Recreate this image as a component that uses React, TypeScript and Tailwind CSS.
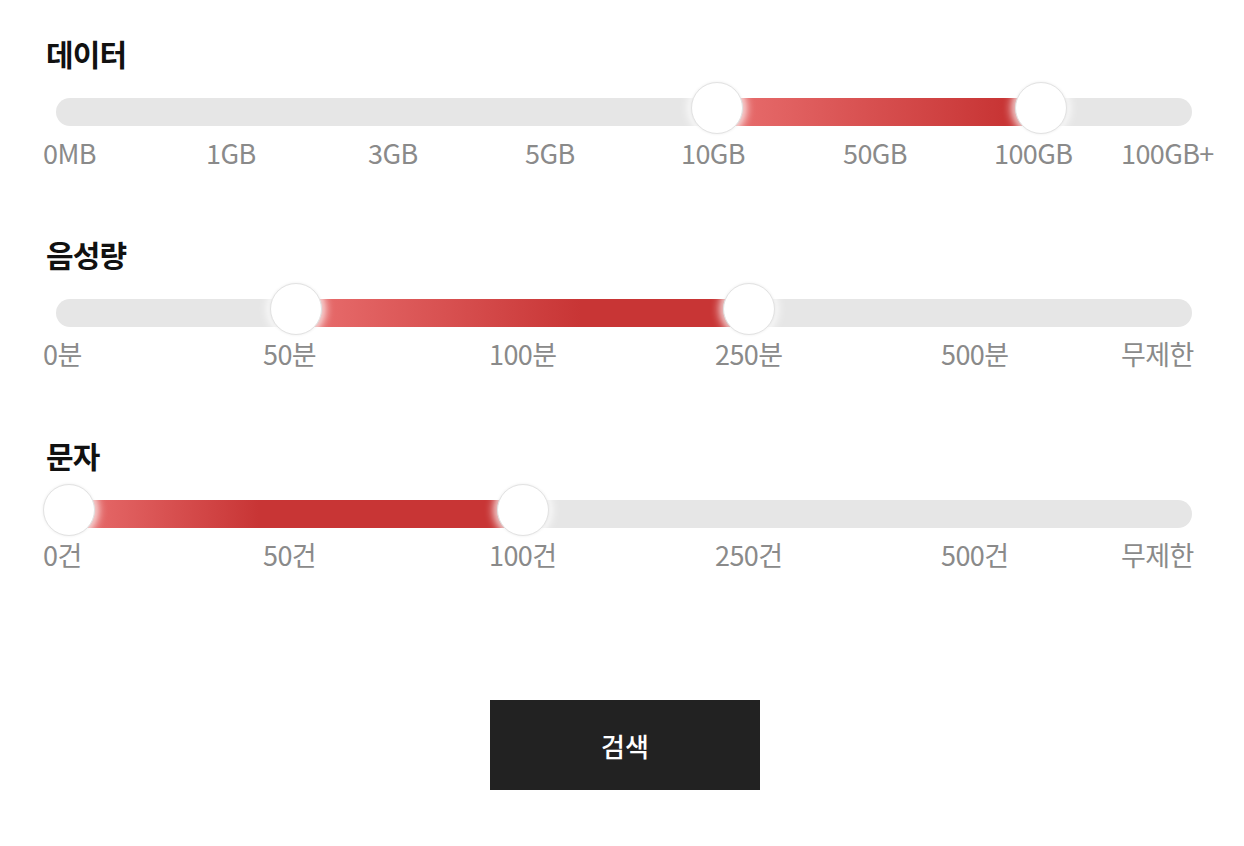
import React from 'react';

interface Row {
  title: string;
  labels: { text: string; w: string }[];
  steps: number;
  from: number;
  to: number;
  fill: string;
}

const rows: Row[] = [
  {
    title: '데이터',
    steps: 7,
    from: 4,
    to: 6,
    fill: 'bg-[linear-gradient(90deg,#e96f6f_0px,#c83535_285px)]',
    labels: [
      { text: '0MB', w: 'w-[163px]' },
      { text: '1GB', w: 'w-[162px]' },
      { text: '3GB', w: 'w-[157px]' },
      { text: '5GB', w: 'w-[156px]' },
      { text: '10GB', w: 'w-[162px]' },
      { text: '50GB', w: 'w-[151px]' },
      { text: '100GB', w: 'w-[127px]' },
      { text: '100GB+', w: '' },
    ],
  },
  {
    title: '음성량',
    steps: 5,
    from: 1,
    to: 3,
    fill: 'bg-[linear-gradient(90deg,#e96f6f_0px,#c83535_285px)]',
    labels: [
      { text: '0분', w: 'w-[220px]' },
      { text: '50분', w: 'w-[226px]' },
      { text: '100분', w: 'w-[226px]' },
      { text: '250분', w: 'w-[226px]' },
      { text: '500분', w: 'w-[180px]' },
      { text: '무제한', w: '' },
    ],
  },
  {
    title: '문자',
    steps: 5,
    from: 0,
    to: 2,
    fill: 'bg-[linear-gradient(90deg,#e96f6f_0px,#c83535_190px)]',
    labels: [
      { text: '0건', w: 'w-[220px]' },
      { text: '50건', w: 'w-[226px]' },
      { text: '100건', w: 'w-[226px]' },
      { text: '250건', w: 'w-[226px]' },
      { text: '500건', w: 'w-[180px]' },
      { text: '무제한', w: '' },
    ],
  },
];

// thumb travel range (left edge of thumb), px
const RANGE = 1134;
const THUMB = 52;

function Thumb({ left }: { left: number }) {
  return (
    <div
      className="absolute top-0 h-[52px] w-[52px] rounded-full border border-[#e2e2e2] bg-white shadow-[0_0_3px_rgba(0,0,0,0.08),0_0_10px_3px_rgba(255,255,255,0.95)]"
      style={{ left }}
    />
  );
}

function RangeRow({ row }: { row: Row }) {
  const a = (row.from / row.steps) * RANGE;
  const b = (row.to / row.steps) * RANGE;
  return (
    <section className="mb-[64px]">
      <h2 className="ml-[3px] text-[30px] leading-[40px] font-bold tracking-[-0.8px] text-[#111]">{row.title}</h2>
      <div className="relative mt-[9px] h-[52px] w-[1186px]">
        <div className="absolute left-[13px] top-[16px] h-[28px] w-[1136px] rounded-full bg-[#e6e6e6]" />
        <div
          className={`absolute top-[16px] h-[28px] ${row.fill}`}
          style={{ left: a + THUMB / 2, width: b - a }}
        />
        <Thumb left={a} />
        <Thumb left={b} />
      </div>
      <div className="flex pt-[1px] text-[27px] leading-[35px] tracking-[-0.6px] text-[#8a8a8a]">
        {row.labels.map((l) => (
          <span key={l.text} className={`${l.w} shrink-0 whitespace-nowrap`}>
            {l.text}
          </span>
        ))}
      </div>
    </section>
  );
}

export default function App() {
  return (
    <div className="min-h-[846px] w-[1244px] bg-white pl-[43px] pr-[39px] pt-[33px] font-['Noto_Sans_CJK_KR','Noto_Sans',sans-serif]">
      {rows.map((r) => (
        <RangeRow key={r.title} row={r} />
      ))}
      <div className="mt-[128px] flex justify-center pl-[2px]">
        <button className="h-[90px] w-[270px] bg-[#222] text-[26px] font-medium text-white">검색</button>
      </div>
    </div>
  );
}
